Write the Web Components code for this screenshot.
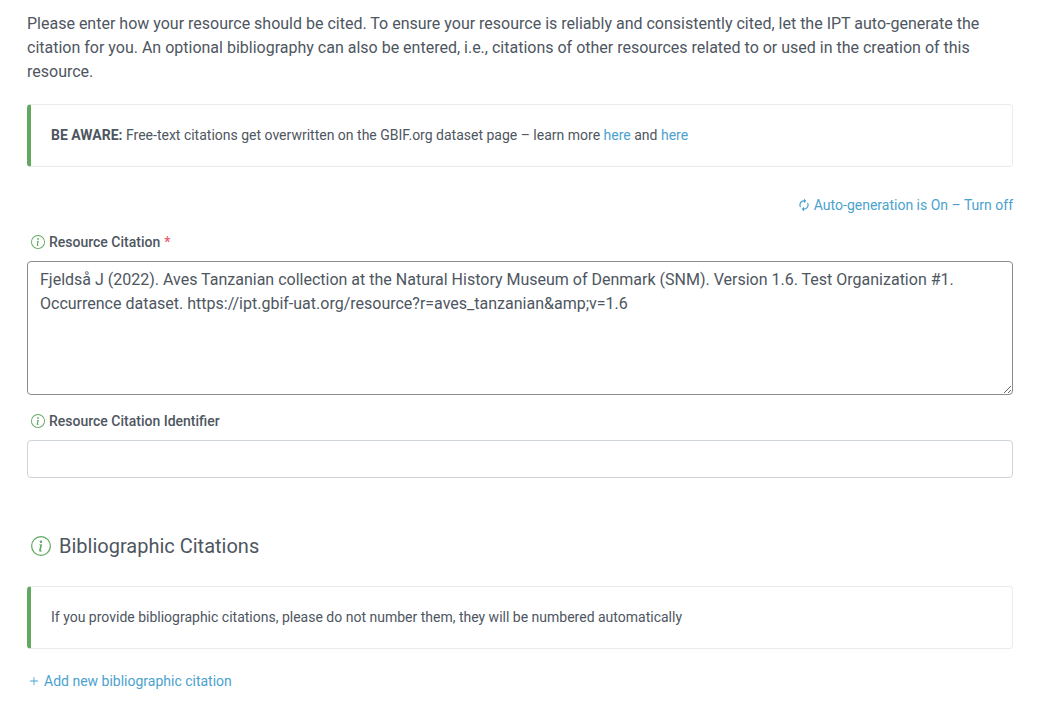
<!DOCTYPE html>
<html lang="en">
<head>
<meta charset="utf-8">
<title>Citations</title>
<style>
  body {
    margin: 0;
    background: #fff;
    color: #4e565f;
    font: 400 16px/24px Roboto, sans-serif;
  }
</style>
</head>
<body>
<citations-page></citations-page>

<script>
const define = (name, html, setup) => {
  const template = document.createElement('template');
  template.innerHTML = html;
  customElements.define(name, class extends HTMLElement {
    constructor() {
      super();
      this.attachShadow({ mode: 'open' }).append(template.content.cloneNode(true));
    }
    connectedCallback() {
      if (setup) setup(this, this.shadowRoot);
    }
  });
};

define('info-button', `
  <style>
    :host { display: inline-flex; color: #61a861; --size: 14px; }
    button { display: flex; margin: 0; padding: 0; border: 0; background: none; color: inherit; cursor: pointer; }
    svg { width: var(--size); height: var(--size); fill: currentColor; }
  </style>
  <button type="button" aria-label="Help">
    <svg viewBox="0 0 16 16" aria-hidden="true">
      <path d="M8 15A7 7 0 1 1 8 1a7 7 0 0 1 0 14zm0 1A8 8 0 1 0 8 0a8 8 0 0 0 0 16z"/>
      <path d="m8.930 6.588-2.290.287-.082.380.450.083c.294.070.352.176.288.469l-.738 3.468c-.194.897.105 1.319.808 1.319.545 0 1.178-.252 1.465-.598l.088-.416c-.200.176-.492.246-.686.246-.275 0-.375-.193-.304-.533L8.930 6.588zM9 4.500a1 1 0 1 1-2 0 1 1 0 0 1 2 0z"/>
    </svg>
  </button>
`);

define('call-out', `
  <style>
    :host {
      display: block; padding: 20px; border: 1px solid #e9ecef; border-left: 4px solid #61a861;
      border-radius: 4px; font-size: 14px; line-height: 21px;
    }
    ::slotted(p) { margin: 0; }
  </style>
  <slot></slot>
`);

define('form-field', `
  <style>
    :host { display: block; }
    .head { display: flex; align-items: center; gap: 4px; padding-left: 4px; margin-bottom: 8px; font-size: 14px; line-height: 21px; font-weight: 500; }
    info-button { padding-bottom: 1px; }
    .required { color: #e4606d; }
    textarea, input {
      display: block; box-sizing: border-box; width: 100%; margin: 0; padding: 6px 12px;
      border: 1px solid #ced4da; border-radius: 4px; background: #fff; color: inherit;
      font: 400 16px/24px Roboto, sans-serif;
    }
    textarea { border-color: #8b8b8b; resize: vertical; overflow: auto; }
    input { height: 38px; }
  </style>
  <div class="head">
    <info-button></info-button>
    <label for="control"></label>
    <span class="required" hidden>*</span>
  </div>
`, (host, root) => {
  if (root.getElementById('control')) return;
  root.querySelector('label').textContent = host.getAttribute('label');
  root.querySelector('.required').hidden = !host.hasAttribute('required');
  const rows = host.getAttribute('rows');
  const control = document.createElement(rows ? 'textarea' : 'input');
  control.id = 'control';
  control.spellcheck = false;
  if (rows) control.rows = Number(rows);
  else control.type = 'text';
  control.required = host.hasAttribute('required');
  control.value = host.getAttribute('value') || '';
  root.append(control);
});

define('action-link', `
  <style>
    :host { display: flex; font-size: 14px; line-height: 21px; }
    a { display: flex; align-items: center; gap: 3px; color: #4ba2ce; text-decoration: none; }
    ::slotted(svg) { width: 14px; height: 14px; padding-bottom: 1px; fill: currentColor; }
  </style>
  <a href="#"><slot name="icon"></slot><slot></slot></a>
`);

define('section-title', `
  <style>
    :host { display: flex; align-items: center; gap: 8px; padding-left: 4px; }
    info-button { --size: 20px; }
    h2 { margin: 0; font-size: 20px; line-height: 24px; font-weight: 400; }
  </style>
  <info-button></info-button>
  <h2><slot></slot></h2>
`);

define('citations-page', `
  <style>
    :host { display: block; padding: 12px 29px 20px 27px; }
    .intro { margin: 0 0 20px; }
    a { color: #4ba2ce; text-decoration: none; }
    strong { font-weight: 700; }
    .toggle { justify-content: flex-end; margin: 28px 0 16px; }
    form-field + form-field { margin-top: 16px; }
    section-title { margin: 56px 0 28px; }
    .add { margin-top: 22px; }
  </style>
  <main>
    <p class="intro">Please enter how your resource should be cited. To ensure your resource is reliably and consistently cited, let the IPT auto-generate the citation for you. An optional bibliography can also be entered, i.e., citations of other resources related to or used in the creation of this resource.</p>
    <call-out><p><strong>BE AWARE:</strong> Free-text citations get overwritten on the GBIF.org dataset page – learn more <a href="#">here</a> and <a href="#">here</a></p></call-out>
    <action-link class="toggle">
      <svg slot="icon" viewBox="0 0 24 24" aria-hidden="true"><path d="M12 6v3l4-4-4-4v3c-4.420 0-8 3.580-8 8 0 1.570.460 3.030 1.240 4.260L6.700 14.800A5.870 5.870 0 0 1 6 12c0-3.310 2.690-6 6-6zm6.760 1.740L17.300 9.200c.440.840.700 1.790.700 2.800 0 3.310-2.690 6-6 6v-3l-4 4 4 4v-3c4.420 0 8-3.580 8-8 0-1.570-.460-3.030-1.240-4.260z"/></svg>
      Auto-generation is On – Turn off
    </action-link>
    <form-field label="Resource Citation" required rows="5" value="Fjeldså J (2022). Aves Tanzanian collection at the Natural History Museum of Denmark (SNM). Version 1.6. Test Organization #1. Occurrence dataset. https://ipt.gbif-uat.org/resource?r=aves_tanzanian&amp;amp;v=1.6"></form-field>
    <form-field label="Resource Citation Identifier"></form-field>
    <section-title>Bibliographic Citations</section-title>
    <call-out><p>If you provide bibliographic citations, please do not number them, they will be numbered automatically</p></call-out>
    <action-link class="add">
      <svg slot="icon" viewBox="0 0 16 16" aria-hidden="true"><path d="M8 3.200a.5.5 0 0 1 .5.5v3.800h3.800a.5.5 0 0 1 0 1H8.500v3.800a.5.5 0 0 1-1 0V8.500H3.700a.5.5 0 0 1 0-1h3.800V3.700a.5.5 0 0 1 .5-.5z"/></svg>
      Add new bibliographic citation
    </action-link>
  </main>
`);
</script>
</body>
</html>
